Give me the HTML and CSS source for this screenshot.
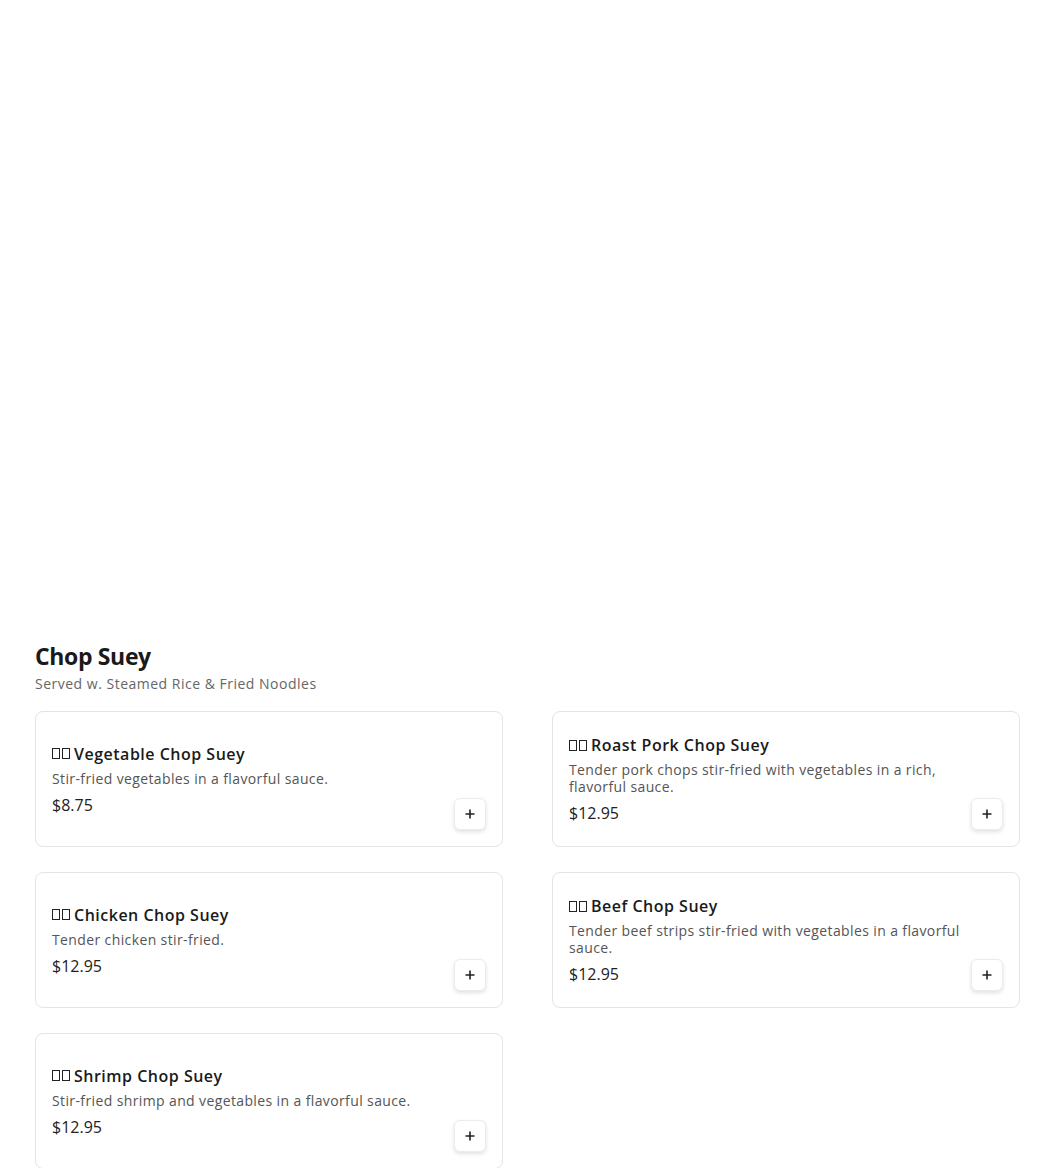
FILE: index.html
```html
<!DOCTYPE html>
<html lang="en">
<head>
<meta charset="utf-8">
<title>Chop Suey</title>
<link rel="stylesheet" href="styles.css">
</head>
<body>
<div class="page">
  <div class="hero-space"></div>
  <section class="section">
    <h2 class="section-title">Chop Suey</h2>
    <p class="section-sub">Served w. Steamed Rice &amp; Fried Noodles</p>
    <div class="grid">
      <div class="card">
        <div class="info">
          <h3 class="name"><span class="tofu"></span><span class="tofu"></span>Vegetable Chop Suey</h3>
          <p class="desc">Stir-fried vegetables in a flavorful sauce.</p>
          <p class="price">$8.75</p>
        </div>
        <button class="add" aria-label="Add"><svg width="12" height="12" viewBox="0 0 12 12"><path d="M6 1.5v9M1.5 6h9" stroke="#222" stroke-width="1.6"/></svg></button>
      </div>
      <div class="card">
        <div class="info">
          <h3 class="name"><span class="tofu"></span><span class="tofu"></span>Roast Pork Chop Suey</h3>
          <p class="desc">Tender pork chops stir-fried with vegetables in a rich, flavorful sauce.</p>
          <p class="price">$12.95</p>
        </div>
        <button class="add" aria-label="Add"><svg width="12" height="12" viewBox="0 0 12 12"><path d="M6 1.5v9M1.5 6h9" stroke="#222" stroke-width="1.6"/></svg></button>
      </div>
      <div class="card">
        <div class="info">
          <h3 class="name"><span class="tofu"></span><span class="tofu"></span>Chicken Chop Suey</h3>
          <p class="desc">Tender chicken stir-fried.</p>
          <p class="price">$12.95</p>
        </div>
        <button class="add" aria-label="Add"><svg width="12" height="12" viewBox="0 0 12 12"><path d="M6 1.5v9M1.5 6h9" stroke="#222" stroke-width="1.6"/></svg></button>
      </div>
      <div class="card">
        <div class="info">
          <h3 class="name"><span class="tofu"></span><span class="tofu"></span>Beef Chop Suey</h3>
          <p class="desc">Tender beef strips stir-fried with vegetables in a flavorful sauce.</p>
          <p class="price">$12.95</p>
        </div>
        <button class="add" aria-label="Add"><svg width="12" height="12" viewBox="0 0 12 12"><path d="M6 1.5v9M1.5 6h9" stroke="#222" stroke-width="1.6"/></svg></button>
      </div>
      <div class="card">
        <div class="info">
          <h3 class="name"><span class="tofu"></span><span class="tofu"></span>Shrimp Chop Suey</h3>
          <p class="desc">Stir-fried shrimp and vegetables in a flavorful sauce.</p>
          <p class="price">$12.95</p>
        </div>
        <button class="add" aria-label="Add"><svg width="12" height="12" viewBox="0 0 12 12"><path d="M6 1.5v9M1.5 6h9" stroke="#222" stroke-width="1.6"/></svg></button>
      </div>
    </div>
  </section>
</div>
</body>
</html>
```

FILE: styles.css
```css
* { box-sizing: border-box; }
html, body { margin: 0; padding: 0; background: #fff; }
body {
  font-family: "Open Sans", "Noto Sans", "Liberation Sans", sans-serif;
  color: #1a1a1a;
}
.page { padding: 0 30px 0 35px; }
.hero-space { height: 640px; }
.section-title {
  margin: 0;
  font-size: 23px;
  line-height: 32px;
  font-weight: 700;
  color: #1a1a1a;
  letter-spacing: -0.35px;
}
.section-sub {
  margin: 2px 0 17px;
  font-size: 14px;
  line-height: 20px;
  color: #666;
  letter-spacing: 0.5px;
}
.grid {
  display: grid;
  grid-template-columns: 1fr 1fr;
  column-gap: 49px;
  row-gap: 25px;
}
.card {
  min-height: 136px;
  border: 1px solid #e4e4e4;
  border-radius: 8px;
  padding: 16px;
  display: flex;
  align-items: center;
  justify-content: space-between;
  gap: 8px;
}
.info { flex: 1; min-width: 0; }
.name {
  margin: 0;
  font-size: 16px;
  line-height: 24px;
  font-weight: 600;
  color: #1a1a1a;
  display: flex;
  align-items: center;
  letter-spacing: 0.5px;
}
.tofu {
  flex: none;
  width: 8px;
  height: 11px;
  border: 1.5px solid #222;
  margin-right: 2px;
}
.tofu + .tofu { margin-right: 4px; }
.desc {
  margin: 4px 0 0;
  font-size: 14px;
  line-height: 17px;
  color: #555;
  letter-spacing: 0.38px;
}
.price {
  margin: 6px 0 0;
  font-size: 16px;
  line-height: 24px;
  color: #222;
}
.add {
  align-self: flex-end;
  flex: none;
  width: 32px;
  height: 32px;
  border: 1px solid #ececec;
  border-radius: 6px;
  background: #fff;
  box-shadow: 0 2px 4px rgba(0,0,0,0.12);
  display: flex;
  align-items: center;
  justify-content: center;
  padding: 0;
  cursor: pointer;
}
```
